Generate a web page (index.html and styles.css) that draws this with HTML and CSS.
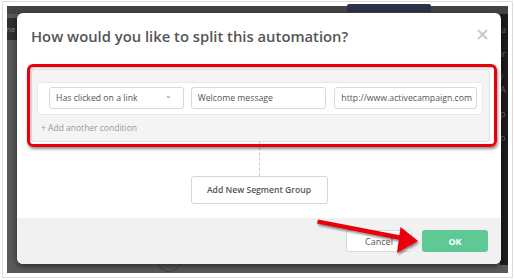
FILE: index.html
```html
<!DOCTYPE html>
<html lang="en">
<head>
    <meta charset="UTF-8">
    <title>Split automation</title>
    <link rel="stylesheet" href="styles.css">
</head>
<body>
    <div class="frame">
        <div class="screen">
            <div class="bg-top"><span class="bg-btn"></span></div>
            <div class="bg-side">ne</div>
            <div class="bg-right">a<br><br>ir<br><br>/ A<br><br>p<br><br>o</div>
            <div class="bg-node"></div>

            <div class="modal">
                <div class="modal-header">
                    <h2>How would you like to split this automation?</h2>
                    <svg class="close" width="11" height="11" viewBox="0 0 11 11">
                        <path d="M1 1L10 10M10 1L1 10" stroke="#c9c9c9" stroke-width="2" fill="none"/>
                    </svg>
                </div>

                <div class="modal-body">
                    <div class="segment">
                        <div class="condition">
                            <div class="field field-select">Has clicked on a link <span class="chev">&#8964;</span></div>
                            <div class="field field-msg">Welcome message</div>
                            <div class="field field-url">http://www.activecampaign.com</div>
                        </div>
                        <div class="add-cond">+ Add another condition</div>
                    </div>
                    <div class="connector"></div>
                    <button class="btn btn-group">Add New Segment Group</button>
                    <!-- annotation box drawn over the screenshot -->
                    <div class="highlight"></div>
                </div>

                <div class="modal-footer">
                    <button class="btn btn-cancel">Cancel</button>
                    <button class="btn btn-ok">OK</button>
                </div>
            </div>
        </div>
    </div>

    <svg class="arrow" width="514" height="280" viewBox="0 0 514 280">
        <defs>
            <filter id="sh" x="-10%" y="-10%" width="120%" height="130%">
                <feDropShadow dx="1" dy="2" stdDeviation="1.2" flood-color="#000" flood-opacity="0.45"/>
            </filter>
        </defs>
        <g filter="url(#sh)" fill="#e8000b">
            <path d="M318 219.5L401 235.5L400 240L317 223.5Z"/>
            <path d="M418 241L397 253L400.5 227Z"/>
        </g>
    </svg>
</body>
</html>
```

FILE: styles.css
```css
body {
    margin: 0;
    background-color: #fff;
    font-family: "Open Sans", "Liberation Sans", sans-serif;
    position: relative;
    width: 514px;
    height: 280px;
    overflow: hidden;
}
.frame {
    margin: 1px 2px;
    border: 1px solid #dcdcdc;
    padding: 4px;
    width: 501px;
}
.screen {
    position: relative;
    height: 267px;
    background-color: #595959;
    padding: 7px 7px 9px 10px;
    box-sizing: border-box;
}
.bg-top {
    position: absolute;
    left: 0;
    top: 0;
    right: 0;
    height: 8px;
    background-color: #444;
}
.bg-btn {
    position: absolute;
    left: 340px;
    top: -2px;
    width: 84px;
    height: 8px;
    background-color: #2b3446;
    border-radius: 2px;
}
.bg-side {
    position: absolute;
    left: 0;
    top: 12px;
    width: 10px;
    height: 22px;
    background-color: #303030;
    color: #888;
    font-size: 8px;
    line-height: 22px;
    overflow: hidden;
    text-indent: -1px;
}
.bg-right {
    position: absolute;
    right: 0;
    top: 8px;
    width: 8px;
    bottom: 8px;
    background-color: #1c1c1c;
    color: #666;
    font-size: 9px;
    line-height: 12px;
    padding-top: 10px;
    overflow: hidden;
    text-indent: 1px;
}
.bg-node {
    position: absolute;
    left: 150px;
    top: 242px;
    width: 22px;
    height: 22px;
    border: 1px solid #404040;
    border-radius: 50%;
}
.modal {
    position: relative;
    height: 251px;
    background-color: #fff;
    border-radius: 6px;
    box-shadow: 0 2px 6px rgba(0, 0, 0, 0.55);
    overflow: hidden;
    display: flex;
    flex-direction: column;
}
.modal-header {
    height: 50px;
    box-sizing: border-box;
    padding: 11px 13px 0 14px;
    display: flex;
    justify-content: space-between;
}
.modal-header h2 {
    margin: 0;
    font-size: 14.8px;
    line-height: 24px;
    font-weight: 600;
    color: #555;
}
.close {
    margin-top: 5px;
}
.modal-body {
    position: relative;
    height: 155px;
    padding-top: 6px;
    box-sizing: border-box;
    display: flex;
    flex-direction: column;
    align-items: center;
}
.segment {
    align-self: stretch;
    margin: 0 11px 0 14px;
    height: 73px;
    box-sizing: border-box;
    background-color: #f4f4f4;
    border: 1px solid #e4e4e4;
    border-radius: 3px;
    padding: 12px 6px 0 5px;
}
.condition {
    height: 33px;
    box-sizing: border-box;
    background-color: #fff;
    border: 1px solid #e8e8e8;
    border-radius: 3px;
    padding: 4px 5px 0 11px;
    display: flex;
    gap: 7px;
}
.field {
    height: 22px;
    box-sizing: border-box;
    border: 1px solid #d9d9d9;
    border-radius: 3px;
    font-size: 8.7px;
    line-height: 20px;
    color: #555;
    padding-left: 6px;
    white-space: nowrap;
    overflow: hidden;
}
.field-select {
    width: 135px;
    position: relative;
}
.chev {
    position: absolute;
    right: 11px;
    top: -3px;
    font-size: 8px;
    color: #888;
}
.field-msg {
    width: 136px;
}
.field-url {
    width: 143px;
    margin-left: 1px;
    padding-left: 6px;
}
.add-cond {
    margin-top: 6px;
    padding-left: 4px;
    font-size: 8.5px;
    line-height: 14px;
    color: #999;
}
.connector {
    height: 34px;
    border-left: 1px dashed #c8c8c8;
}
.btn {
    font-family: "Open Sans", "Liberation Sans", sans-serif;
    box-sizing: border-box;
    border-radius: 3px;
    cursor: pointer;
    padding: 0;
}
.btn-group {
    width: 137px;
    height: 28px;
    background-color: #fff;
    border: 1px solid #d6d6d6;
    color: #555;
    font-size: 8.6px;
    font-weight: 600;
}
.highlight {
    position: absolute;
    left: 10px;
    top: 1px;
    width: 470px;
    height: 83px;
    box-sizing: border-box;
    border: 3px solid #e8000b;
    border-radius: 6px;
    box-shadow: 1px 2px 3px rgba(0, 0, 0, 0.45), inset 1px 1px 2px rgba(0, 0, 0, 0.25);
}
.modal-footer {
    flex: 1;
    background-color: #f1f1f1;
    padding: 12px 13px 0 0;
    display: flex;
    justify-content: flex-end;
    align-items: flex-start;
    gap: 10px;
}
.btn-cancel {
    width: 66px;
    height: 22px;
    background-color: #fff;
    border: 1px solid #dadada;
    color: #555;
    font-size: 9px;
}
.btn-ok {
    width: 66px;
    height: 22px;
    background-color: #5ec995;
    border: none;
    color: #fff;
    font-size: 9px;
    font-weight: 700;
}
.arrow {
    position: absolute;
    left: 0;
    top: 0;
    pointer-events: none;
}
```
